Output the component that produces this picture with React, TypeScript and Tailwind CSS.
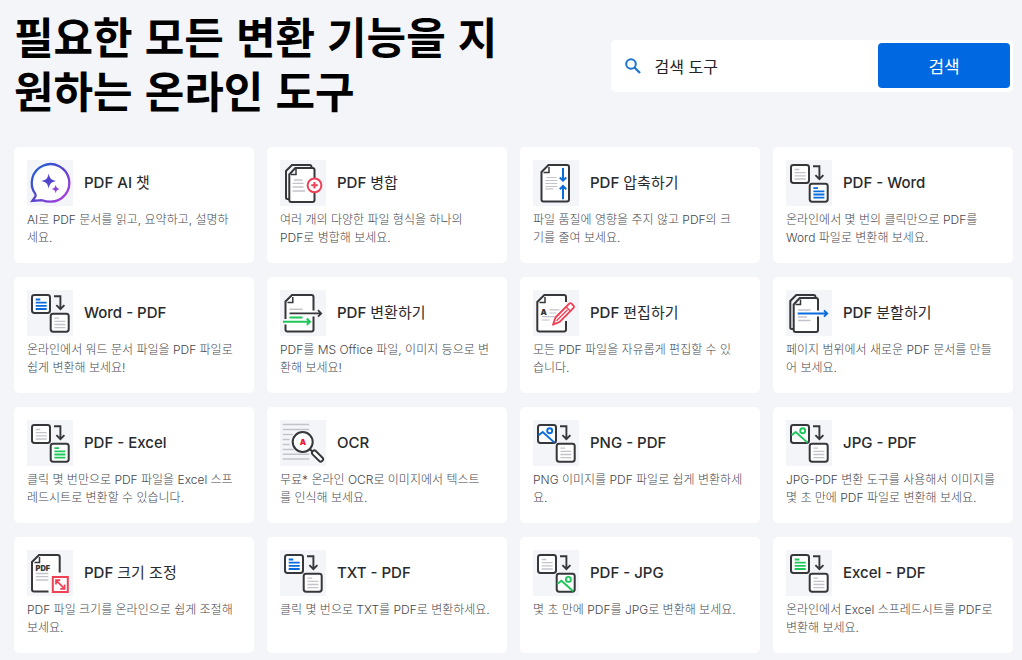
import React from 'react';

type Tool = {
  title: string;
  description: string;
  icon: React.ReactNode;
};

const DARK = '#36373b';
const GREY = '#c3c4cb';
const BLUE = '#0a6cdc';
const GREEN = '#1fc75a';
const RED = '#ef4056';

function Icon({ children }: { children: React.ReactNode }) {
  return (
    <svg viewBox="0 0 46 46" className="size-full" fill="none" strokeWidth={2} aria-hidden="true">
      {children}
    </svg>
  );
}

function Lines({ x, y, color }: { x: number; y: number; color: string }) {
  return (
    <path
      d={`M${x + 3.7} ${y + 4.5}h4.6M${x + 3.7} ${y + 7.6}h11M${x + 3.7} ${y + 10.8}h11M${x + 3.7} ${y + 14}h11`}
      stroke={color}
      strokeWidth={color === GREY ? 1.3 : 1.8}
    />
  );
}

function Picture({ x, y, color }: { x: number; y: number; color: string }) {
  return (
    <g stroke={color} strokeWidth={1.9}>
      <circle cx={x + 11.7} cy={y + 5.7} r={2.5} />
      <path d={`M${x + 0.5} ${y + 10.3}L${x + 4.7} ${y + 7}L${x + 16.5} ${y + 17.6}`} />
    </g>
  );
}

type Side = { kind: 'text' | 'image'; color: string };

function SwapIcon({ from, to }: { from: Side; to: Side }) {
  const boxes = [
    { side: from, pos: 5 },
    { side: to, pos: 23.7 },
  ];

  return (
    <Icon>
      {boxes.map(({ side, pos }) => (
        <g key={pos}>
          <rect x={pos} y={pos} width={18} height={18} rx={2.4} fill="#fff" stroke={DARK} />
          {side.kind === 'text' ? (
            <Lines x={pos} y={pos} color={side.color} />
          ) : (
            <Picture x={pos} y={pos} color={side.color} />
          )}
        </g>
      ))}
      <path d="M27 6.3h6.4v12.5M29.4 15.2l4 4 4-4" stroke={DARK} strokeWidth={1.9} />
    </Icon>
  );
}

function ChatIcon() {
  return (
    <Icon>
      <defs>
        <linearGradient id="chat" x1="4" y1="6" x2="42" y2="42" gradientUnits="userSpaceOnUse">
          <stop stopColor="#1b63d6" />
          <stop offset="0.5" stopColor="#5b45cc" />
          <stop offset="1" stopColor="#b93be6" />
        </linearGradient>
      </defs>
      <path
        d="M23.5 41.7a18.8 18.8 0 1 0-15.2-7.8c.5 1 .5 1.8 0 2.8L5.3 41l9.7-.8c2.500 1 5.400 1.500 8.500 1.500Z"
        fill="#fff"
        stroke="url(#chat)"
        strokeWidth={2.3}
      />
      <path d="M21.7 13.5c1 4.8 2.5 6.4 7.3 7.5-4.8 1.1-6.3 2.7-7.3 7.5-1-4.8-2.5-6.4-7.3-7.5 4.8-1.1 6.300-2.700 7.300-7.500Z" fill="#5145cb" />
      <path d="M28.7 24.8c.6 2.7 1.5 3.6 4.2 4.2-2.7.6-3.6 1.5-4.2 4.2-.6-2.7-1.5-3.6-4.2-4.2 2.7-.6 3.6-1.5 4.2-4.2Z" fill="#8a43d8" />
    </Icon>
  );
}

function MergeIcon() {
  return (
    <Icon>
      <path d="M9 39H7.5C6.5 39 6 38.5 6 37.5V11l6-6h17.5c1.5 0 2 .5 2 2" stroke={DARK} />
      <path d="M9.3 14.5l6-6.5h17.2c1.3 0 2 .7 2 2v30c0 1.2-.8 2-2 2H11.3c-1.2 0-2-.8-2-2Z" fill="#fff" stroke={DARK} />
      <path d="M16 9v5.5h-5" stroke={DARK} strokeWidth={1.5} />
      <path d="M14 20h8.5M12.5 23.3h11M12.5 27h11M12.5 31h12.5" stroke={GREY} strokeWidth={1.3} />
      <circle cx="34.5" cy="25.3" r="6.9" fill="#fff" stroke={RED} />
      <path d="M34.5 22v6.6M31.2 25.3h6.6" stroke={RED} />
    </Icon>
  );
}

function CompressIcon() {
  return (
    <Icon>
      <path d="M8.5 12l7-7H34c1.300 0 2 .7 2 2v32.500c0 1.300-.7 2-2 2H10.500c-1.300 0-2-.7-2-2Z" fill="#fff" stroke={DARK} />
      <path d="M16 7v5.5h-5.5" stroke={DARK} strokeWidth={1.5} />
      <path d="M13.5 17.5h10M12.3 20.5h12M12.3 23.5h12M12.3 26.5h12M12.3 28.8h8" stroke={GREY} strokeWidth={1.2} />
      <path d="M30 8v12.5M26.8 17.5l3.2 3.2 3.2-3.2M30 39.3V26.5M26.8 29.2l3.2-3.2 3.2 3.2" stroke={BLUE} />
    </Icon>
  );
}

function TransformIcon() {
  return (
    <Icon>
      <path d="M5.5 11.5L12 5h19.5c1.3 0 2 .7 2 2v32.5c0 1.3-.7 2-2 2h-24c-1.3 0-2-.7-2-2Z" fill="#fff" />
      <path d="M5.5 29V11.5L12 5h19.5c1.3 0 2 .7 2 2v13.5M33.5 26.5v13c0 1.3-.7 2-2 2h-24c-1.3 0-2-.7-2-2v-5" stroke={DARK} />
      <path d="M12.8 7v5.5H7.5" stroke={DARK} strokeWidth={1.5} />
      <path d="M9.5 19.3h13" stroke={GREY} strokeWidth={1.5} />
      <path d="M9.5 23.4h31M38 20.2l3.2 3.2-3.2 3.2" stroke={DARK} strokeWidth={1.7} />
      <path d="M9.5 27.5h13M3 31.7h26.5M26.8 28.5l3.2 3.2-3.2 3.2" stroke={GREEN} />
    </Icon>
  );
}

function EditIcon() {
  return (
    <Icon>
      <path d="M4.3 12l7-7H31c1.3 0 2 .7 2 2v32.5c0 1.3-.7 2-2 2H6.3c-1.3 0-2-.7-2-2Z" fill="#fff" />
      <path d="M33 12V7c0-1.3-.7-2-2-2H11.3l-7 7v27.5c0 1.3.7 2 2 2H31c1.3 0 2-.7 2-2V31" stroke={DARK} />
      <path d="M12 7v5.5H6.500" stroke={DARK} strokeWidth={1.5} />
      <text x="7.5" y="24.5" fontSize="8" fontWeight="900" fill={DARK} fontFamily="Inter, sans-serif">A</text>
      <path d="M16.5 19.8h10M16.5 23h7M8.7 26.7h13M8.7 30h8" stroke={GREY} strokeWidth={1.2} />
      <path
        d="M20 34.7l2.5-7.2L36 13.8c.9-.9 1.9-.9 2.8 0l1.5 1.5c.9.9.9 1.9 0 2.8L26.7 31.8Z"
        fill="#fff"
        stroke={RED}
        strokeWidth={1.9}
        strokeLinejoin="round"
      />
      <path d="M33 16.7l4.3 4.3M23.5 30.8l11-11" stroke={RED} strokeWidth={1.3} />
    </Icon>
  );
}

function SplitIcon() {
  return (
    <Icon>
      <path d="M7 39H6c-1 0-1.7-.5-1.7-1.5V11l6-6h17c1.500 0 2.200.5 2.200 2" stroke={DARK} />
      <path d="M7.7 14.5l6-6.5H30c1.3 0 2 .7 2 2v30c0 1.2-.8 2-2 2H9.7c-1.2 0-2-.8-2-2Z" fill="#fff" />
      <path d="M32 20.5V10c0-1.3-.7-2-2-2H13.7l-6 6.5V40c0 1.2.8 2 2 2H30c1.2 0 2-.8 2-2V26.5" stroke={DARK} />
      <path d="M14.5 9.5v5H9.5" stroke={DARK} strokeWidth={1.5} />
      <path d="M12 20h12.5M12 27h9M12 30.5h12.5" stroke={GREY} strokeWidth={1.3} />
      <path d="M11.7 23.5h29M38 20.3l3.2 3.2-3.2 3.2" stroke={BLUE} strokeWidth={1.9} />
    </Icon>
  );
}

function OcrIcon() {
  return (
    <Icon>
      <path
        d="M2.7 4.5h26.5M2.7 9.5h26.5M2.7 14.5h10M2.7 19.5h7M2.7 24.5h7M2.7 29.5h11M2.7 34.3h26.5M2.7 39h26.5"
        stroke={GREY}
        strokeWidth={1.5}
      />
      <circle cx="22.7" cy="22" r="10" fill="#fff" stroke={DARK} />
      <text x="19.7" y="25.3" fontSize="8" fontWeight="900" fill="#f0142f" fontFamily="Inter, sans-serif">A</text>
      <path d="M29.7 29l2.3 2.3" stroke={DARK} />
      <rect x="31" y="33.2" width="13.5" height="4.6" rx="2" transform="rotate(45 37 35.5)" fill="#fff" stroke={DARK} strokeWidth={1.9} />
    </Icon>
  );
}

function ResizeIcon() {
  return (
    <Icon>
      <path d="M5 12l7-7h18.5c1.300 0 2 .7 2 2v34.500H7c-1.300 0-2-.7-2-2Z" fill="#fff" />
      <path d="M32.7 22.5V7c0-1.3-.7-2-2-2H12l-7 7v27.5c0 1.3.7 2 2 2h14.5" stroke={DARK} />
      <path d="M12.5 7v5.5H7.5" stroke={DARK} strokeWidth={1.5} />
      <text x="8.500" y="20.6" fontSize="7.5" fontWeight="900" fill={DARK} fontFamily="Inter, sans-serif">PDF</text>
      <path d="M8.8 23.5h12.5M8.8 26.7h12.5M8.8 30h12.5" stroke={GREY} strokeWidth={1.3} />
      <rect x="25.8" y="27" width="15" height="15" fill="#fff" stroke={RED} />
      <path d="M29.5 30.7l7.6 7.6M29 34.5v-4.3h4.3M37.6 34.5v4.3h-4.3" stroke={RED} strokeWidth={1.7} />
    </Icon>
  );
}

const TEXT = (color: string): Side => ({ kind: 'text', color });
const IMAGE = (color: string): Side => ({ kind: 'image', color });

const TOOLS: Tool[] = [
  { title: 'PDF AI 챗', description: 'AI로 PDF 문서를 읽고, 요약하고, 설명하\n세요.', icon: <ChatIcon /> },
  { title: 'PDF 병합', description: '여러 개의 다양한 파일 형식을 하나의\nPDF로 병합해 보세요.', icon: <MergeIcon /> },
  { title: 'PDF 압축하기', description: '파일 품질에 영향을 주지 않고 PDF의 크\n기를 줄여 보세요.', icon: <CompressIcon /> },
  { title: 'PDF - Word', description: '온라인에서 몇 번의 클릭만으로 PDF를\nWord 파일로 변환해 보세요.', icon: <SwapIcon from={TEXT(GREY)} to={TEXT(BLUE)} /> },
  { title: 'Word - PDF', description: '온라인에서 워드 문서 파일을 PDF 파일로\n쉽게 변환해 보세요!', icon: <SwapIcon from={TEXT(BLUE)} to={TEXT(GREY)} /> },
  { title: 'PDF 변환하기', description: 'PDF를 MS Office 파일, 이미지 등으로 변\n환해 보세요!', icon: <TransformIcon /> },
  { title: 'PDF 편집하기', description: '모든 PDF 파일을 자유롭게 편집할 수 있\n습니다.', icon: <EditIcon /> },
  { title: 'PDF 분할하기', description: '페이지 범위에서 새로운 PDF 문서를 만들\n어 보세요.', icon: <SplitIcon /> },
  { title: 'PDF - Excel', description: '클릭 몇 번만으로 PDF 파일을 Excel 스프\n레드시트로 변환할 수 있습니다.', icon: <SwapIcon from={TEXT(GREY)} to={TEXT(GREEN)} /> },
  { title: 'OCR', description: '무료* 온라인 OCR로 이미지에서 텍스트\n를 인식해 보세요.', icon: <OcrIcon /> },
  { title: 'PNG - PDF', description: 'PNG 이미지를 PDF 파일로 쉽게 변환하세\n요.', icon: <SwapIcon from={IMAGE(BLUE)} to={TEXT(GREY)} /> },
  { title: 'JPG - PDF', description: 'JPG-PDF 변환 도구를 사용해서 이미지를\n몇 초 만에 PDF 파일로 변환해 보세요.', icon: <SwapIcon from={IMAGE(GREEN)} to={TEXT(GREY)} /> },
  { title: 'PDF 크기 조정', description: 'PDF 파일 크기를 온라인으로 쉽게 조절해\n보세요.', icon: <ResizeIcon /> },
  { title: 'TXT - PDF', description: '클릭 몇 번으로 TXT를 PDF로 변환하세요.', icon: <SwapIcon from={TEXT(BLUE)} to={TEXT(GREY)} /> },
  { title: 'PDF - JPG', description: '몇 초 만에 PDF를 JPG로 변환해 보세요.', icon: <SwapIcon from={TEXT(GREY)} to={IMAGE(GREEN)} /> },
  { title: 'Excel - PDF', description: '온라인에서 Excel 스프레드시트를 PDF로\n변환해 보세요.', icon: <SwapIcon from={TEXT(GREEN)} to={TEXT(GREY)} /> },
];

function ToolCard({ tool }: { tool: Tool }) {
  // Hangul in a title is set lighter than the Latin part
  const parts = tool.title.split(/([가-힣][가-힣 ]*)/).filter(Boolean);

  return (
    <a href="#" className="block rounded-[5px] bg-white pt-[13px] pr-1 pb-4 pl-[13px] hover:shadow-md">
      <div className="flex items-center gap-[11px]">
        <div className="size-[46px] shrink-0 bg-[#f4f5f9]">{tool.icon}</div>
        <h2 className="font-[Inter,'Noto_Sans_CJK_KR',sans-serif] text-[15px] leading-6 font-medium text-[#292a2e]">
          {parts.map((part) => (
            <span key={part} className={/[가-힣]/.test(part) ? 'font-normal' : undefined}>
              {part}
            </span>
          ))}
        </h2>
      </div>
      <p className="mt-[5px] font-[Inter,'Noto_Sans_CJK_KR',sans-serif] text-xs leading-[18px] font-light whitespace-pre-line text-[#46474c]">
        {tool.description}
      </p>
    </a>
  );
}

export default function App() {
  return (
    <main lang="ko" className="min-h-screen bg-[#f4f5f9] pt-2 pr-[9px] pb-[7px] pl-[14px] font-['Noto_Sans_CJK_KR',sans-serif]">
      <header className="flex items-center">
        <h1 className="w-1/2 text-[43px] leading-[54px] font-bold break-all text-black">
          필요한 모든 변환 기능을 지원하는 온라인 도구
        </h1>
        <form
          className="mt-2 ml-[97px] flex flex-1 items-center rounded-[5px] bg-white pt-[3px] pr-[3px] pb-1 pl-1"
          onSubmit={(e) => e.preventDefault()}
        >
          <label htmlFor="tool-search" className="flex shrink-0 pr-[14px] pl-[10px]">
            <svg viewBox="0 0 16 16" className="size-4" fill="none" stroke="#1f73d2" strokeWidth={2} aria-label="검색 도구">
              <circle cx="6" cy="6" r="4.8" />
              <path d="M9.5 9.5l5.5 5.5" strokeWidth={2.3} />
            </svg>
          </label>
          <input
            id="tool-search"
            type="search"
            placeholder="검색 도구"
            className="min-w-0 flex-1 text-base text-black outline-none placeholder:text-[#222]"
          />
          <button type="submit" className="h-[45px] w-1/3 rounded bg-[#0068e1] text-[17px] text-white">
            검색
          </button>
        </form>
      </header>

      <section className="mt-[31px] grid grid-cols-2 gap-x-[13px] gap-y-[14px] md:grid-cols-4">
        {TOOLS.map((tool) => (
          <ToolCard key={tool.title} tool={tool} />
        ))}
      </section>
    </main>
  );
}
